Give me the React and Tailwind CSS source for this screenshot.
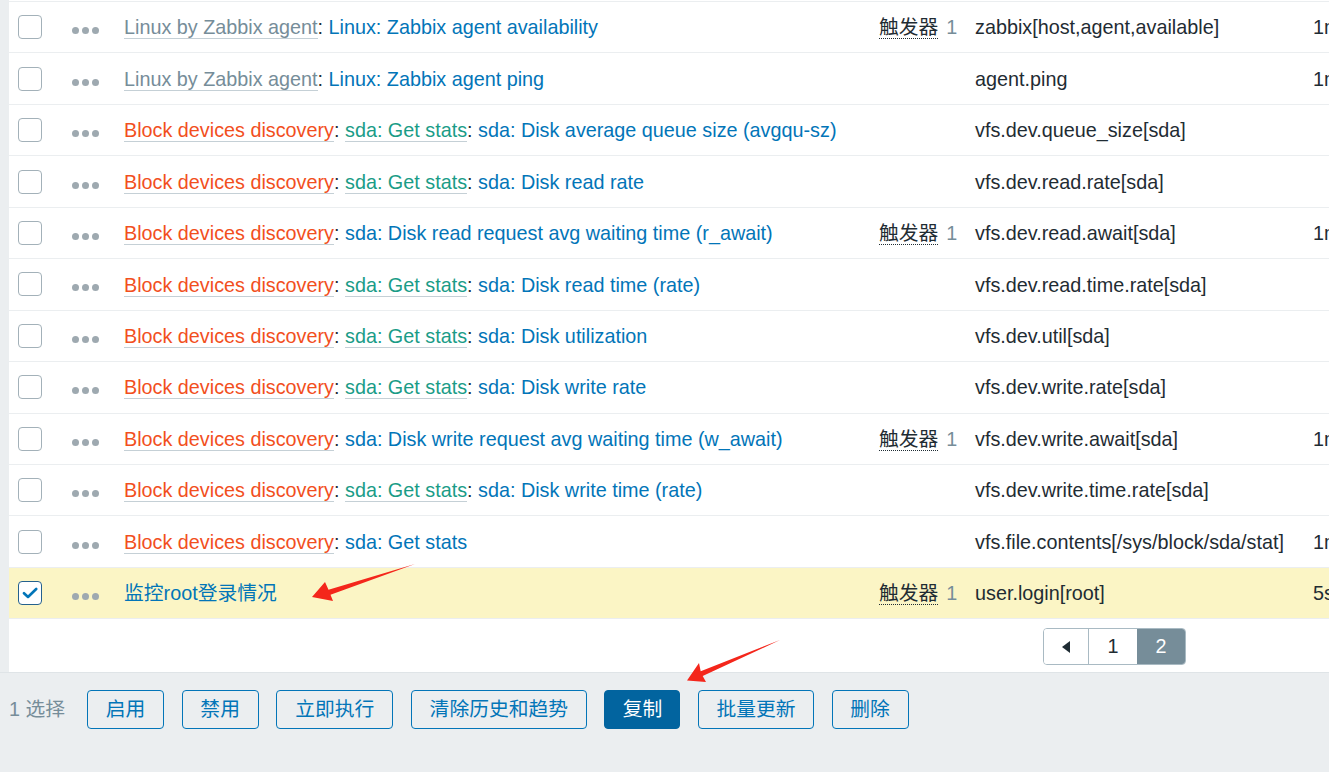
import React from "react";

const GRAY = "text-[#768d99]";
const BLUE = "text-[#0275b8]";

const ROWS = [
  { parts: [["g", "Linux by Zabbix agent"], ["b", "Linux: Zabbix agent availability"]], trig: true, key: "zabbix[host,agent,available]", last: "1m" },
  { parts: [["g", "Linux by Zabbix agent"], ["b", "Linux: Zabbix agent ping"]], key: "agent.ping", last: "1m" },
  { parts: [["o", "Block devices discovery"], ["t", "sda: Get stats"], ["b", "sda: Disk average queue size (avgqu-sz)"]], key: "vfs.dev.queue_size[sda]" },
  { parts: [["o", "Block devices discovery"], ["t", "sda: Get stats"], ["b", "sda: Disk read rate"]], key: "vfs.dev.read.rate[sda]" },
  { parts: [["o", "Block devices discovery"], ["b", "sda: Disk read request avg waiting time (r_await)"]], trig: true, key: "vfs.dev.read.await[sda]", last: "1m" },
  { parts: [["o", "Block devices discovery"], ["t", "sda: Get stats"], ["b", "sda: Disk read time (rate)"]], key: "vfs.dev.read.time.rate[sda]" },
  { parts: [["o", "Block devices discovery"], ["t", "sda: Get stats"], ["b", "sda: Disk utilization"]], key: "vfs.dev.util[sda]" },
  { parts: [["o", "Block devices discovery"], ["t", "sda: Get stats"], ["b", "sda: Disk write rate"]], key: "vfs.dev.write.rate[sda]" },
  { parts: [["o", "Block devices discovery"], ["b", "sda: Disk write request avg waiting time (w_await)"]], trig: true, key: "vfs.dev.write.await[sda]", last: "1m" },
  { parts: [["o", "Block devices discovery"], ["t", "sda: Get stats"], ["b", "sda: Disk write time (rate)"]], key: "vfs.dev.write.time.rate[sda]" },
  { parts: [["o", "Block devices discovery"], ["b", "sda: Get stats"]], key: "vfs.file.contents[/sys/block/sda/stat]", last: "1m" },
  { parts: [["b", "监控root登录情况"]], trig: true, key: "user.login[root]", last: "5s", checked: true },
];

function Part({ kind, text }) {
  if (kind === "b") return <span className={BLUE}>{text}</span>;
  const color =
    kind === "g" ? "text-[#768d99]" : kind === "o" ? "text-[#f24f1d]" : "text-[#1a9c87]";
  return <span className={`${color} border-b border-[#c5d0d6]`}>{text}</span>;
}

function Checkbox({ checked }) {
  return (
    <div
      className={
        "w-6 h-6 rounded-[4px] bg-white border flex items-center justify-center " +
        (checked ? "border-[#24618e]" : "border-[#a3b1b9]")
      }
    >
      {checked && (
        <svg width="16" height="12" viewBox="0 0 16 12">
          <path d="M2 6.2 L6 10 L14.2 2" fill="none" stroke="#0275b8" strokeWidth="2.6" strokeLinecap="round" strokeLinejoin="round" />
        </svg>
      )}
    </div>
  );
}

function Dots() {
  return (
    <div className="flex gap-[3px] mt-[5px]">
      <span className="w-[7px] h-[7px] rounded-full bg-[#9ea9b0]" />
      <span className="w-[7px] h-[7px] rounded-full bg-[#9ea9b0]" />
      <span className="w-[7px] h-[7px] rounded-full bg-[#9ea9b0]" />
    </div>
  );
}

function Row({ row }) {
  return (
    <div
      className={
        "flex items-center h-[51.45px] pt-[2px] border-t border-[#ebeef0] whitespace-nowrap " +
        (row.checked ? "bg-[#fbf5c5]" : "bg-white")
      }
    >
      <div className="w-[63px] pl-[9px] shrink-0 -mt-[2px]">
        <Checkbox checked={row.checked} />
      </div>
      <div className="w-[52px] shrink-0">
        <Dots />
      </div>
      <div className="w-[755px] shrink-0 text-[#1f2c33]">
        {row.parts.map(([k, t], i) => (
          <React.Fragment key={i}>
            {i > 0 && ": "}
            <Part kind={k} text={t} />
          </React.Fragment>
        ))}
      </div>
      <div className="w-[96px] shrink-0">
        {row.trig && (
          <>
            <span className="text-[#1f2c33] border-b border-dotted border-[#1f2c33]">触发器</span>
            <span className={`${GRAY} ml-[8px]`}>1</span>
          </>
        )}
      </div>
      <div className="w-[338px] shrink-0 text-[#1f2c33]">{row.key}</div>
      <div className="shrink-0 text-[#1f2c33]">{row.last}</div>
    </div>
  );
}

const BUTTONS = [
  { label: "启用", w: "w-[77px]" },
  { label: "禁用", w: "w-[77px]" },
  { label: "立即执行", w: "w-[117px]" },
  { label: "清除历史和趋势", w: "w-[176px]" },
  { label: "复制", w: "w-[76px]", active: true },
  { label: "批量更新", w: "w-[116px]" },
  { label: "删除", w: "w-[77px]" },
];

export default function App() {
  return (
    <div
      className="relative w-[1329px] h-[772px] overflow-hidden bg-[#ebeef0] text-[19.8px]"
      style={{ fontFamily: '"Liberation Sans", Arial, "Noto Sans CJK SC", sans-serif' }}
    >
      <div className="ml-[9px] bg-white pt-[1px]">
        {ROWS.map((r, i) => (
          <Row key={i} row={r} />
        ))}
        {/* Paging */}
        <div className="flex justify-end pr-[143px] pt-[9px] h-[53.6px] border-t border-[#ebeef0]">
          <div className="flex h-[37px] border border-[#a9bac3] rounded-[4px] overflow-hidden">
            <div className="w-[45px] flex items-center justify-center bg-white border-r border-[#a9bac3]">
              <svg width="10" height="12" viewBox="0 0 10 12">
                <path d="M9 0 L9 12 L1 6 Z" fill="#1f2c33" />
              </svg>
            </div>
            <div className="w-[48px] flex items-center justify-center bg-white text-[#1f2c33]">1</div>
            <div className="w-[48px] flex items-center justify-center bg-[#768d99] text-white">2</div>
          </div>
        </div>
      </div>

      {/* Action bar */}
      <div className="border-t border-[#dfe4e7] pt-[17px] pl-[9px] flex items-center">
        <span className={`${GRAY} mr-[22px]`}>1 选择</span>
        <div className="flex gap-[17.6px]">
          {BUTTONS.map((b) => (
            <button
              key={b.label}
              className={
                `${b.w} h-[39px] flex items-center justify-center rounded-[4px] border ` +
                (b.active
                  ? "bg-[#02649f] border-[#02649f] text-white"
                  : "border-[#0275b8] text-[#0275b8] bg-transparent")
              }
            >
              {b.label}
            </button>
          ))}
        </div>
      </div>

      {/* Annotation arrows */}
      <svg className="absolute inset-0 pointer-events-none" width="1329" height="772">
        <polygon points="415,564 328.5,589.8 325,582 312,597 333,601 330.5,594.8" fill="#f4261b" />
        <polygon points="780,640 700.7,671.2 699,663 687,680.5 706,682 702.7,676" fill="#f4261b" />
      </svg>
    </div>
  );
}
